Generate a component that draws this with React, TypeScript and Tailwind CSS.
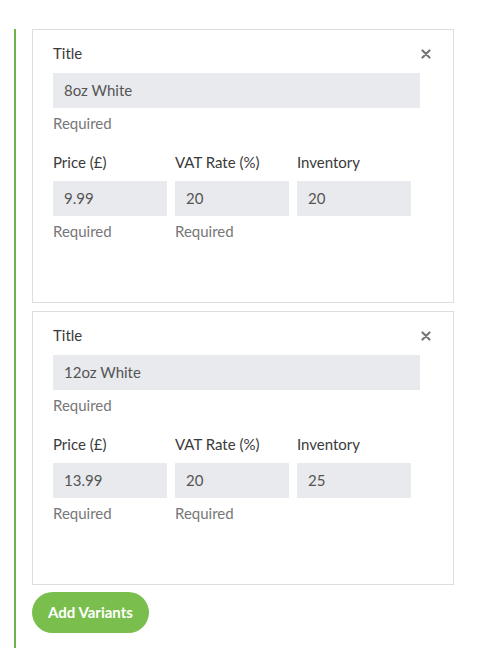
import React from 'react';

interface Variant {
  title: string;
  price: string;
  vat: string;
  inventory: string;
}

const variants: Variant[] = [
  { title: '8oz White', price: '9.99', vat: '20', inventory: '20' },
  { title: '12oz White', price: '13.99', vat: '20', inventory: '25' },
];

const Field: React.FC<{ label: string; value: string; required?: boolean; width: string }> = ({ label, value, required, width }) => (
  <div className={`flex flex-col ${width}`}>
    <label className="text-[15px] leading-[20px] text-[#3a3a3a]">{label}</label>
    <div className="mt-[9px] h-[35px] bg-[#e8eaed] px-[11px] flex items-center text-[15px] text-[#555]">{value}</div>
    {required ? (
      <span className="mt-[5px] text-[15px] leading-[20px] text-[#777]">Required</span>
    ) : (
      <span className="mt-[5px] h-[20px]" />
    )}
  </div>
);

const VariantCard: React.FC<{ variant: Variant }> = ({ variant }) => (
  <div className="relative border border-[#dedede] bg-white pl-[20px] pt-[13px] pb-[61px]">
    <button className="absolute right-[22px] top-[19px] text-[#777]">
      <svg width="10" height="10" viewBox="0 0 10 10" stroke="currentColor" strokeWidth="2.2" strokeLinecap="round">
        <path d="M1.5 1.5l7 7M8.5 1.5l-7 7" />
      </svg>
    </button>
    <div className="flex flex-col w-[367px]">
      <label className="text-[15px] leading-[20px] text-[#3a3a3a]">Title</label>
      <div className="mt-[10px] h-[35px] bg-[#e8eaed] px-[11px] flex items-center text-[15px] text-[#555]">{variant.title}</div>
      <span className="mt-[5px] text-[15px] leading-[20px] text-[#777]">Required</span>
    </div>
    <div className="mt-[19px] flex gap-[8px]">
      <Field label="Price (£)" value={variant.price} required width="w-[114px]" />
      <Field label="VAT Rate (%)" value={variant.vat} required width="w-[114px]" />
      <Field label="Inventory" value={variant.inventory} width="w-[114px]" />
    </div>
  </div>
);

export default function App() {
  return (
    <div className="min-h-screen bg-white pt-[29px] pl-[14px] font-['Lato','Open_Sans',sans-serif]">
      <div className="w-[440px] border-l-2 border-[#6cb34e] pl-[16px] pb-[15px]">
        <div className="flex flex-col gap-[8px] w-[422px]">
          {variants.map((v, i) => (
            <VariantCard key={i} variant={v} />
          ))}
        </div>
        <button className="mt-[7px] h-[41px] w-[117px] rounded-full bg-[#7abf4e] text-white text-[15px] font-bold">
          Add Variants
        </button>
      </div>
    </div>
  );
}
